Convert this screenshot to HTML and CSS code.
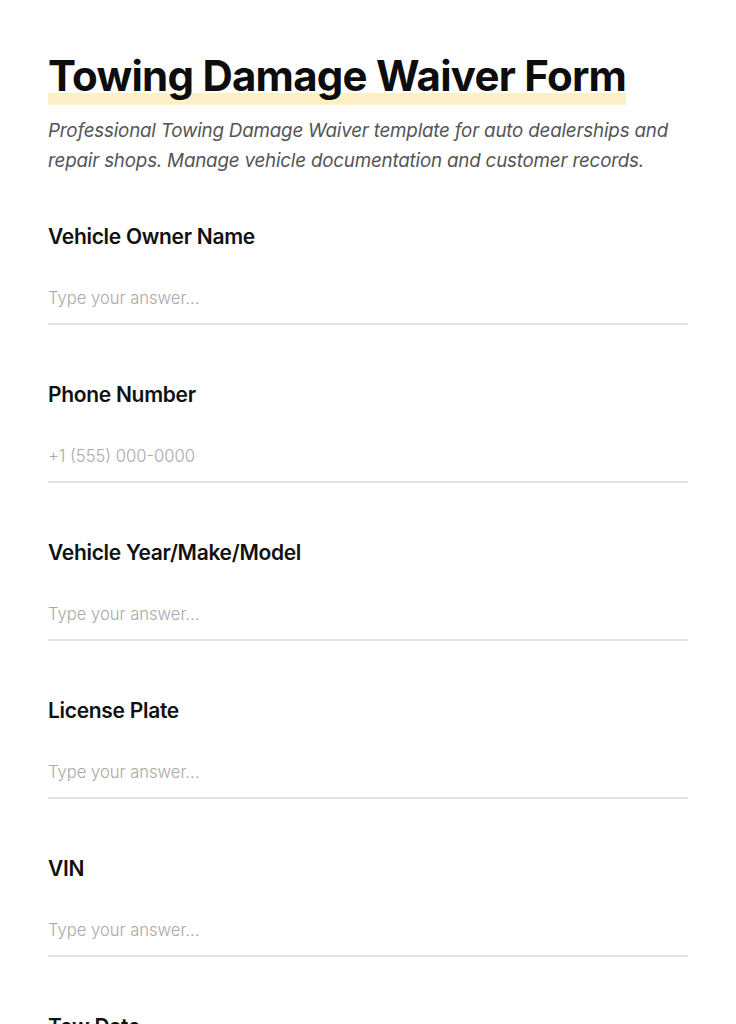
FILE: index.html
```html
<!DOCTYPE html>
<html lang="en">
<head>
<meta charset="utf-8">
<title>Towing Damage Waiver Form</title>
<link rel="stylesheet" href="styles.css">
</head>
<body>
<main class="page">
  <header class="intro">
    <h1 class="title">Towing Damage Waiver Form</h1>
    <p class="subtitle">Professional Towing Damage Waiver template for auto dealerships and repair shops. Manage vehicle documentation and customer records.</p>
  </header>
  <form class="form">
    <div class="field">
      <label class="label" for="f1">Vehicle Owner Name</label>
      <input class="input" id="f1" type="text" placeholder="Type your answer...">
    </div>
    <div class="field">
      <label class="label" for="f2">Phone Number</label>
      <input class="input" id="f2" type="tel" placeholder="+1 (555) 000-0000">
    </div>
    <div class="field">
      <label class="label" for="f3">Vehicle Year/Make/Model</label>
      <input class="input" id="f3" type="text" placeholder="Type your answer...">
    </div>
    <div class="field">
      <label class="label" for="f4">License Plate</label>
      <input class="input" id="f4" type="text" placeholder="Type your answer...">
    </div>
    <div class="field">
      <label class="label" for="f5">VIN</label>
      <input class="input" id="f5" type="text" placeholder="Type your answer...">
    </div>
    <div class="field">
      <label class="label" for="f6">Tow Date</label>
      <input class="input" id="f6" type="text" placeholder="Type your answer...">
    </div>
  </form>
</main>
</body>
</html>
```

FILE: styles.css
```css
* { box-sizing: border-box; }
html, body { margin: 0; padding: 0; background: #ffffff; }
body {
  font-family: Inter, "Noto Sans", "Liberation Sans", sans-serif;
  color: #111111;
}
.page {
  width: 640px;
  margin: 0 48px;
  padding-top: 51px;
}
.intro { margin-bottom: 47px; }
.title {
  margin: 0;
  width: fit-content;
  padding-bottom: 4px;
  font-size: 42px;
  line-height: 50px;
  font-weight: 700;
  letter-spacing: -0.75px;
  color: #0d0d0d;
  background: linear-gradient(to bottom, transparent 0, transparent 42px, #fdf0c6 42px, #fdf0c6 54px);
}
.subtitle {
  margin: 11px 0 0;
  font-size: 18.8px;
  line-height: 30px;
  font-style: italic;
  font-weight: 400;
  color: #555555;
  letter-spacing: -0.2px;
}
.form { display: flex; flex-direction: column; gap: 56px; }
.field { display: flex; flex-direction: column; }
.label {
  font-size: 21px;
  line-height: 28px;
  font-weight: 600;
  letter-spacing: -0.3px;
  color: #111111;
  margin-bottom: 35px;
}
.input {
  font-family: inherit;
  font-size: 16.6px;
  font-weight: 300;
  border: 0;
  border-bottom: 2px solid #e2e2e2;
  padding: 0 0 13px;
  line-height: 24px;
  outline: none;
  background: transparent;
  color: #111;
}
.input::placeholder { color: #a9a9a9; opacity: 1; }
```
